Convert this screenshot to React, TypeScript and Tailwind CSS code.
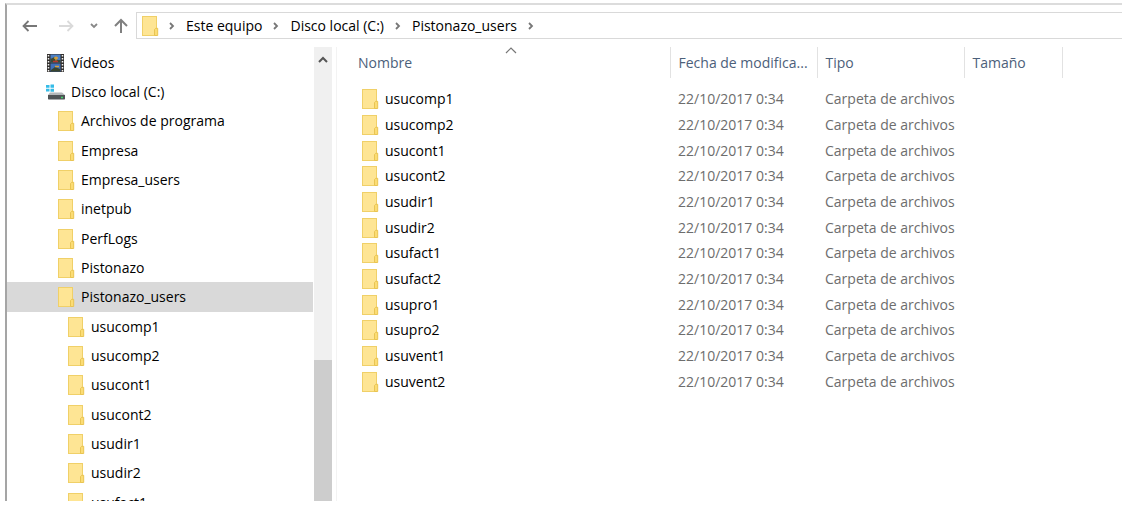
import { Fragment } from "react";

function Folder() {
  return (
    <svg width="17" height="20" viewBox="0 0 17 20" className="shrink-0" aria-hidden="true">
      <rect x="0.5" y="0.5" width="14" height="19" fill="#fee594" stroke="#f0d068" />
      <path d="M12.500 19.500v-6l1.200-1.200h2v7.200z" fill="#fbdc74" stroke="#e9c452" />
    </svg>
  );
}

function VideoIcon() {
  return (
    <svg width="17" height="18" viewBox="0 0 17 18" className="shrink-0" aria-hidden="true">
      <rect width="17" height="18" fill="#33302e" />
      <rect x="3.500" y="0.500" width="10" height="8" fill="#4b7fc4" />
      <rect x="3.500" y="9.500" width="10" height="8" fill="#3f6fb8" />
      <path d="M3.500 5l4-2 3 3h3v2.500h-10z" fill="#3c4a35" />
      <path d="M7 4h4M9 2.500v4" stroke="#d8a23a" strokeWidth="1.500" />
      <path d="M6 7.500h5" stroke="#b9342c" strokeWidth="1.500" />
      <path d="M4 16l4-3 5 2v2.500H4z" fill="#39442f" />
      <path d="M8 12.500h4" stroke="#d8a23a" strokeWidth="1.500" />
      <path d="M1.500 1v17M15.500 1v17" stroke="#f2f2f2" strokeWidth="1.500" strokeDasharray="1.500 1.500" />
    </svg>
  );
}

function DriveIcon() {
  return (
    <svg width="19" height="16" viewBox="0 0 19 16" className="shrink-0" aria-hidden="true">
      <path d="M0 1h3.500v2.700H0zM4.500 0.500H8v3.200H4.500zM0 4.700h3.500v2.800H0zM4.500 4.700H8v3H4.500z" fill="#35bce8" />
      <path d="M4 8.500h12l3 2.500H2z" fill="#b4b7ba" />
      <path d="M2 11h17v4l-.500.500h-16L2 15z" fill="#4f5356" />
      <path d="M15 13.500h2" stroke="#43d26a" strokeWidth="1.500" />
    </svg>
  );
}

function Chevron() {
  return (
    <svg width="6" height="8" viewBox="0 0 6 8" className="shrink-0" aria-hidden="true">
      <path d="M1 1l3 3-3 3" fill="none" stroke="#777" strokeWidth="1.800" />
    </svg>
  );
}

const users = [
  "usucomp1", "usucomp2", "usucont1", "usucont2", "usudir1", "usudir2",
  "usufact1", "usufact2", "usupro1", "usupro2", "usuvent1", "usuvent2",
];

const tree = [
  { name: "Vídeos", level: 0, icon: "video" },
  { name: "Disco local (C:)", level: 0, icon: "drive" },
  ...["Archivos de programa", "Empresa", "Empresa_users", "inetpub", "PerfLogs", "Pistonazo", "Pistonazo_users"].map(
    (name) => ({ name, level: 1, icon: "folder" }),
  ),
  ...users.slice(0, 7).map((name) => ({ name, level: 2, icon: "folder" })),
];

const indent = ["pl-[39px]", "pl-[51px]", "pl-[61px]"];
const crumbs = ["Este equipo", "Disco local (C:)", "Pistonazo_users"];

function Toolbar() {
  return (
    <header className="flex h-[27px] shrink-0 items-center">
      <nav aria-label="Navegación" className="flex w-[129px] shrink-0 items-center pl-[15px]">
        <button type="button" aria-label="Atrás" className="w-9">
          <svg width="16" height="12" viewBox="0 0 16 12" fill="none" stroke="#777" strokeWidth="1.800" aria-hidden="true">
            <path d="M15 6H2M6.500 1L1.500 6l5 5" />
          </svg>
        </button>
        <button type="button" aria-label="Adelante" className="w-8">
          <svg width="16" height="12" viewBox="0 0 16 12" fill="none" stroke="#dadada" strokeWidth="1.800" aria-hidden="true">
            <path d="M1 6h13M9.500 1l5 5-5 5" />
          </svg>
        </button>
        <button type="button" aria-label="Ubicaciones recientes" className="w-6">
          <svg width="8" height="6" viewBox="0 0 8 6" fill="none" stroke="#888" strokeWidth="1.800" aria-hidden="true">
            <path d="M1 1l3 3 3-3" />
          </svg>
        </button>
        <button type="button" aria-label="Subir">
          <svg width="14" height="16" viewBox="0 0 14 16" fill="none" stroke="#808080" strokeWidth="2" aria-hidden="true">
            <path d="M7 15V2M1 8l6-6 6 6" />
          </svg>
        </button>
      </nav>
      <nav aria-label="Ruta" className="flex h-[27px] min-w-0 flex-1 items-center border-y border-l border-[#d9d9d9] pl-[5px]">
        <Folder />
        <div className="flex items-center gap-[11px] pl-[10px]">
          <Chevron />
          {crumbs.map((crumb) => (
            <Fragment key={crumb}>
              <a href="#" className="whitespace-nowrap">{crumb}</a>
              <Chevron />
            </Fragment>
          ))}
        </div>
      </nav>
    </header>
  );
}

function Tree() {
  return (
    <ul className="min-w-0 flex-1 overflow-hidden pt-px">
      {tree.map((item) => (
        <li key={item.name} className={`h-[29px] nth-[3n]:h-[30px] ${item.name === "Pistonazo_users" ? "bg-[#d9d9d9]" : ""}`}>
          <a href="#" className={`flex h-full items-center gap-[6px] ${indent[item.level]}`}>
            <span className={`flex shrink-0 ${item.level === 0 ? "w-[19px] justify-center" : ""}`}>
              {item.icon === "video" ? <VideoIcon /> : item.icon === "drive" ? <DriveIcon /> : <Folder />}
            </span>
            <span className="whitespace-nowrap">{item.name}</span>
          </a>
        </li>
      ))}
    </ul>
  );
}

function FileList() {
  return (
    <main className="min-w-0 flex-1 overflow-hidden border-l border-[#f3f3f3]">
      <table className="w-full table-fixed border-collapse text-left">
        <colgroup>
          <col className="w-[333px]" />
          <col className="w-[147px]" />
          <col className="w-[147px]" />
          <col className="w-[98px]" />
          <col />
        </colgroup>
        <thead className="text-[#4c607a]">
          <tr className="h-[31px]">
            <th className="relative border-r border-[#e2e2e2] p-0 pl-[21px] font-normal">
              Nombre
              <svg width="12" height="7" viewBox="0 0 12 7" className="absolute top-0 right-[153px]" fill="none" stroke="#777" strokeWidth="1.200" aria-hidden="true">
                <path d="M1 6l5-5 5 5" />
              </svg>
            </th>
            <th className="border-r border-[#e2e2e2] p-0 pl-2 font-normal whitespace-nowrap">Fecha de modifica...</th>
            <th className="border-r border-[#e2e2e2] p-0 pl-2 font-normal">Tipo</th>
            <th className="border-r border-[#e2e2e2] p-0 pl-2 font-normal">Tamaño</th>
            <th className="p-0" />
          </tr>
        </thead>
        <tbody className="text-[#6d6d6d] before:block before:h-2">
          {users.map((user) => (
            <tr key={user} className="h-[26px] nth-[3n]:h-[25px]">
              <td className="p-0 pl-[25px]">
                <a href="#" className="flex items-center gap-[6px] text-black">
                  <Folder />
                  <span>{user}</span>
                </a>
              </td>
              <td className="p-0 pl-2">22/10/2017 0:34</td>
              <td className="p-0 pl-2 whitespace-nowrap">Carpeta de archivos</td>
              <td className="p-0" />
              <td className="p-0" />
            </tr>
          ))}
        </tbody>
      </table>
    </main>
  );
}

export default function App() {
  return (
    <div className="h-screen bg-white pt-[3px] pr-2 pb-[13px] pl-[5px] font-['Open_Sans','Noto_Sans',sans-serif] text-[14px] leading-5 text-black">
      <div className="flex h-full flex-col overflow-hidden border-t-2 border-l-2 border-t-[#dcdcdc] border-l-[#a5a5a5] pt-[7px]">
        <Toolbar />
        <div className="flex min-h-0 flex-1 pt-2">
          <aside className="flex w-[329px] shrink-0 pr-1">
            <Tree />
            <div className="ml-px flex w-[18px] shrink-0 flex-col bg-[#f0f0f0]">
              <button type="button" aria-label="Desplazar hacia arriba" className="flex h-6 shrink-0 items-center justify-center">
                <svg width="10" height="7" viewBox="0 0 10 7" fill="none" stroke="#555" strokeWidth="2" aria-hidden="true">
                  <path d="M1 6l4-4 4 4" />
                </svg>
              </button>
              <div className="mt-auto h-[31%] bg-[#cdcdcd]" />
            </div>
          </aside>
          <FileList />
        </div>
      </div>
    </div>
  );
}
